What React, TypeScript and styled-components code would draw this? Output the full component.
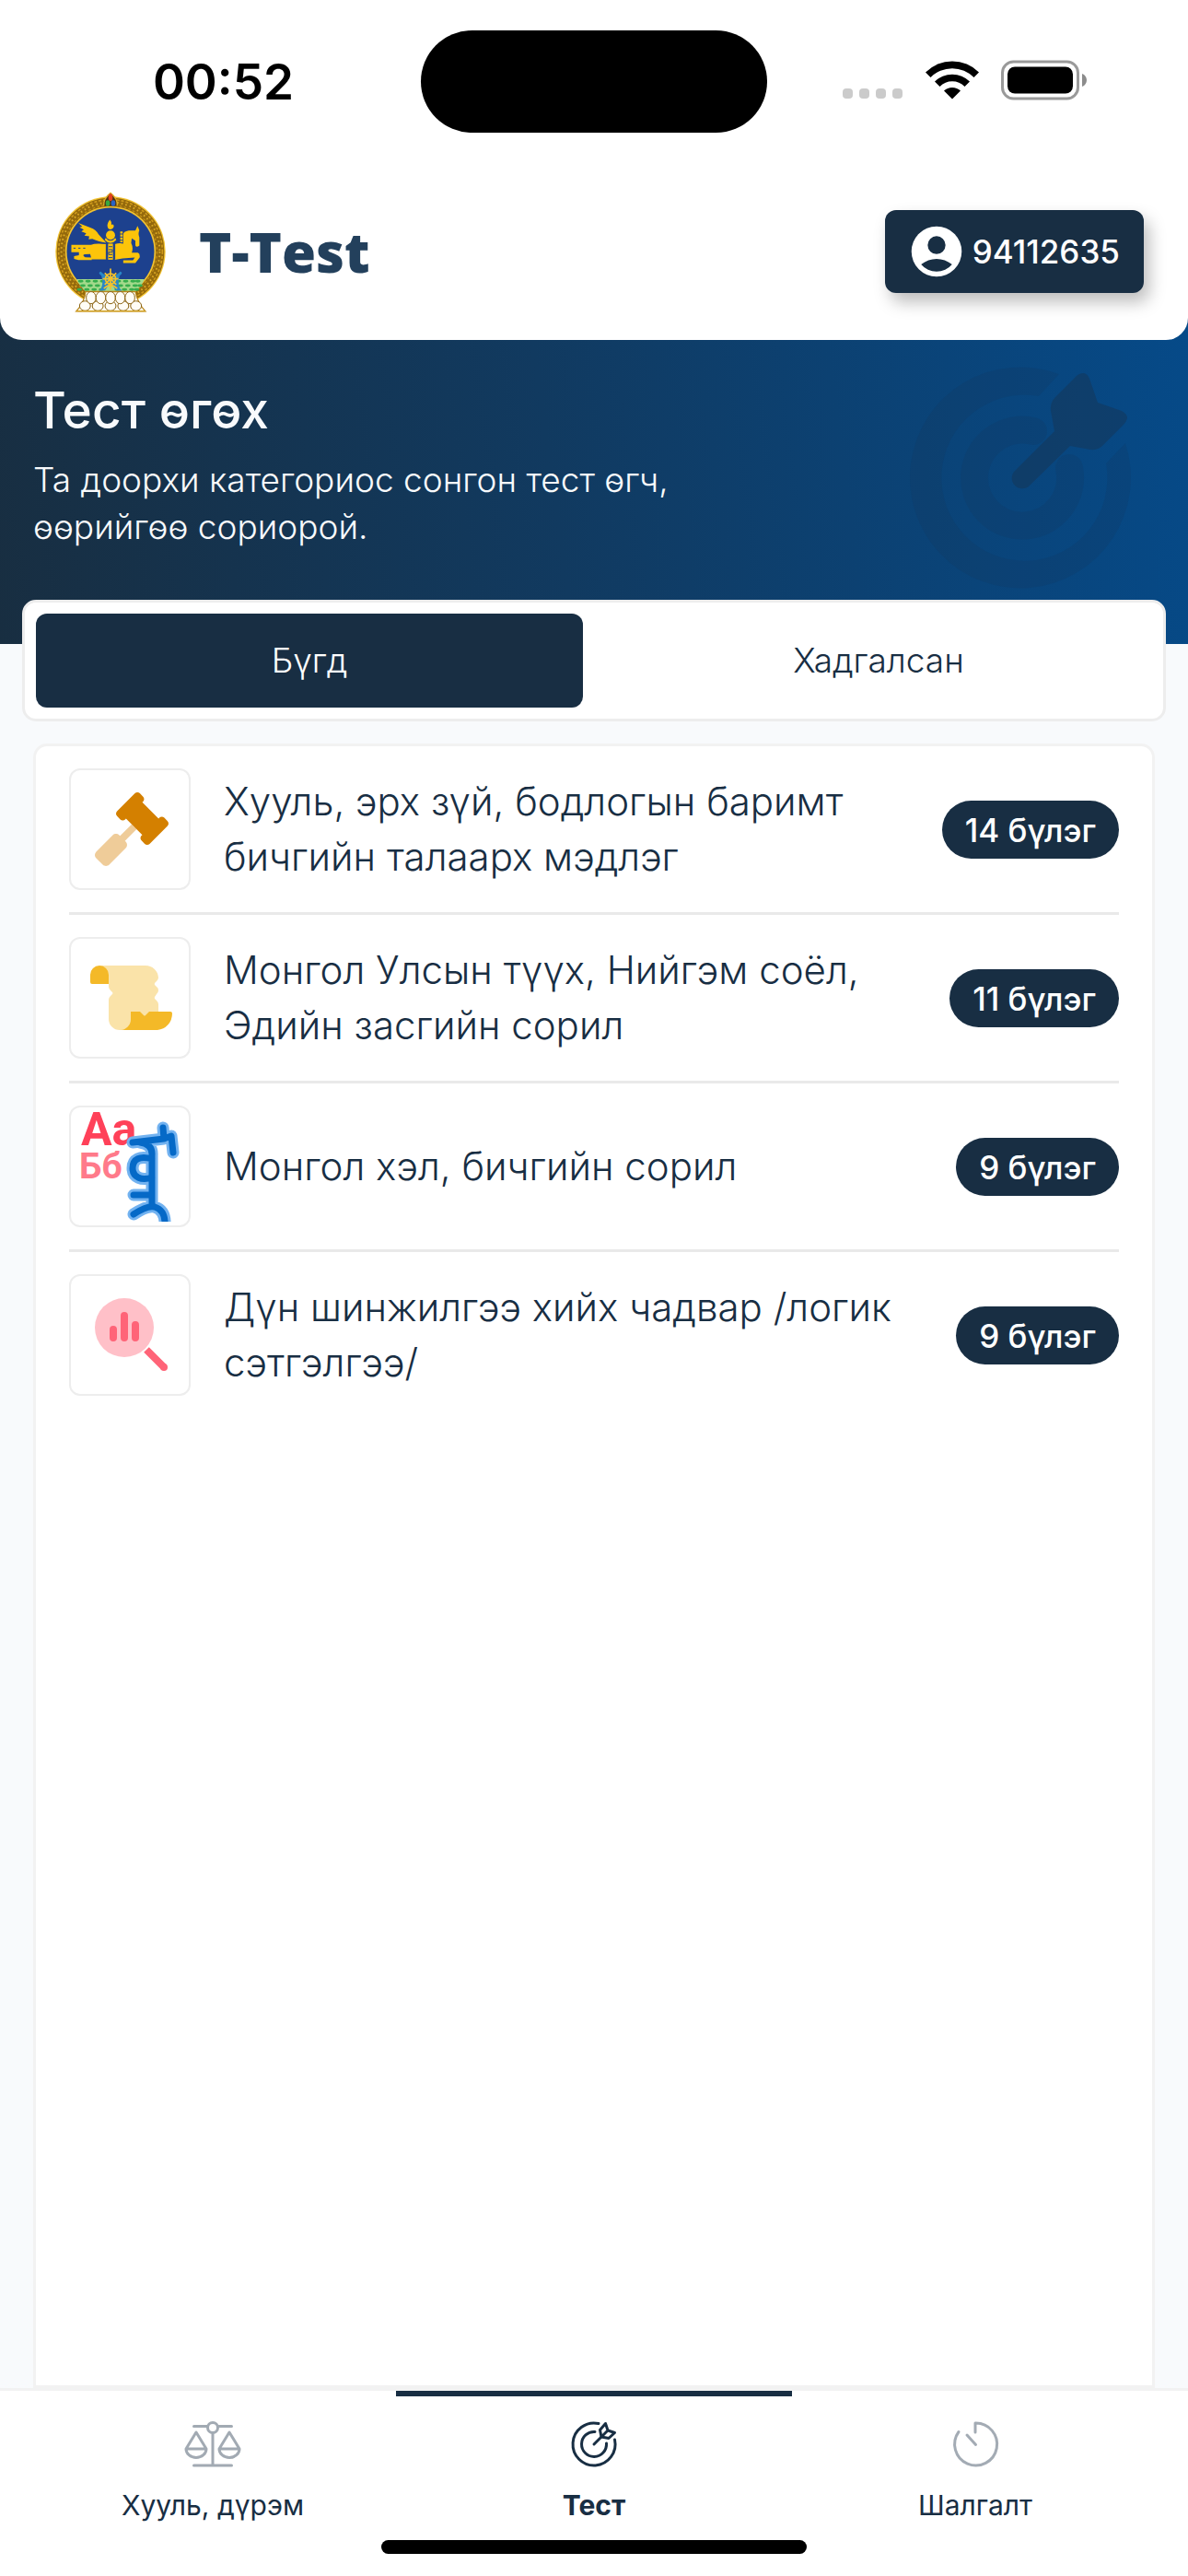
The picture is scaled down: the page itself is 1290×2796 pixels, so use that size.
import React, { useState } from "react";
import styled, { createGlobalStyle } from "styled-components";

const navy = "#182e43";

const GlobalStyle = createGlobalStyle`
  * { box-sizing: border-box; }
  html, body { margin: 0; padding: 0; }
  body { background: #f8fafc; font-family: Inter, "Noto Sans", sans-serif; color: ${navy}; }
  button { font: inherit; border: 0; margin: 0; cursor: pointer; }
  a { color: inherit; text-decoration: none; }
  h1, h2, p, ul { margin: 0; padding: 0; }
  svg { display: block; flex: none; overflow: visible; }
`;

const Screen = styled.div`
  display: flex;
  flex-direction: column;
  min-height: 100vh;
  background: #f8fafc;
`;

const Masthead = styled.div`
  background: linear-gradient(82deg, #182e41 0%, #113a60 45%, #054b8b 100%);
`;

const TopPanel = styled.div`
  background: #fff;
  border-radius: 0 0 24px 24px;
`;

const StatusBar = styled.div`
  display: grid;
  grid-template-columns: 1fr 376px 1fr;
  align-items: center;
  padding-top: 33px;
`;

const Clock = styled.time`
  justify-self: center;
  margin-left: 28px;
  font-size: 53px;
  line-height: 64px;
  font-weight: 600;
  color: #000;
`;

const Island = styled.div`
  height: 111px;
  border-radius: 56px;
  background: #000;
`;

const StatusIcons = styled.div`
  display: flex;
  align-items: center;
  gap: 24px;
  justify-self: center;
  margin-right: 28px;
  padding-bottom: 3px;
`;

const Header = styled.header`
  display: flex;
  align-items: center;
  justify-content: space-between;
  height: 225px;
  padding: 33px 48px 0 60px;
`;

const Brand = styled.div`
  display: flex;
  align-items: center;
  gap: 36px;
`;

const BrandName = styled.h1`
  font-family: "Open Sans", sans-serif;
  font-weight: 800;
  font-size: 60px;
  line-height: 72px;
  color: #23405c;
`;

const AccountButton = styled.button`
  display: flex;
  align-items: center;
  gap: 9px;
  height: 90px;
  padding: 0 26px;
  border-radius: 12px;
  background: ${navy};
  color: #fff;
  font-size: 35px;
  line-height: 48px;
  font-weight: 500;
  box-shadow: 6px 10px 18px rgba(0, 0, 0, 0.26);
`;

const Hero = styled.section`
  display: flex;
  justify-content: space-between;
  align-items: flex-start;
  height: 330px;
  padding: 30px 60px 0 36px;
`;

const HeroText = styled.div`
  display: flex;
  flex-direction: column;
  gap: 14px;
  padding-top: 10px;
  color: #f8fafc;
`;

const HeroTitle = styled.h2`
  font-size: 55px;
  line-height: 72px;
  font-weight: 500;
`;

const HeroNote = styled.p`
  max-width: 740px;
  font-size: 37px;
  line-height: 51px;
  font-weight: 300;
`;

const Tabs = styled.div`
  display: grid;
  grid-template-columns: 1fr 1fr;
  gap: 24px;
  margin: -48px 24px 24px;
  padding: 12px;
  border: 3px solid #ededed;
  border-radius: 15px;
  background: #fff;
`;

const Tab = styled.button<{ $active: boolean }>`
  height: 102px;
  border-radius: 12px;
  background: ${(p) => (p.$active ? navy : "transparent")};
  color: ${(p) => (p.$active ? "#fff" : navy)};
  font-size: 37px;
  line-height: 48px;
  font-weight: 300;
`;

const Card = styled.ul`
  flex: 1;
  margin: 0 36px;
  padding: 0 36px;
  border: 3px solid #f2f2f2;
  border-radius: 15px 15px 0 0;
  background: #fff;
  list-style: none;
`;

const Row = styled.li`
  & + & { border-top: 3px solid #e9e9e9; }
`;

const RowLink = styled.a`
  display: flex;
  align-items: center;
  gap: 36px;
  padding: 24px 0;
`;

const IconTile = styled.span`
  display: flex;
  align-items: center;
  justify-content: center;
  flex: none;
  width: 132px;
  height: 132px;
  padding-left: 3px;
  border: 2px solid #ededed;
  border-radius: 12px;
`;

const RowTitle = styled.span`
  flex: 1;
  font-size: 42px;
  line-height: 60px;
  font-weight: 300;
`;

const Badge = styled.span`
  flex: none;
  padding: 2px 25px 0;
  border-radius: 32px;
  background: ${navy};
  color: #fff;
  font-size: 35px;
  line-height: 61px;
  font-weight: 500;
`;

const BottomBar = styled.footer`
  border-top: 3px solid #f2f2f2;
  background: #fff;
  padding-bottom: 24px;
`;

const Nav = styled.nav`
  position: relative;
  display: grid;
  grid-template-columns: repeat(3, 1fr);
  padding: 30px 24px 0;
`;

const NavMarker = styled.span`
  position: absolute;
  top: 0;
  left: calc(100% / 3);
  width: calc(100% / 3);
  height: 6px;
  background: ${navy};
`;

const NavLink = styled.a<{ $active?: boolean }>`
  display: flex;
  flex-direction: column;
  align-items: center;
  gap: 20px;
  height: 132px;
  padding-top: 3px;
  font-size: 30px;
  line-height: 42px;
  font-weight: ${(p) => (p.$active ? 700 : 400)};
  svg { opacity: ${(p) => (p.$active ? 1 : 0.4)}; }
`;

const HomeIndicator = styled.div`
  width: 462px;
  height: 15px;
  margin: 0 auto;
  border-radius: 8px;
  background: #000;
`;

const Signal = () => (
  <svg width="66" height="44" viewBox="0 0 66 44" fill="#cbcbcb">
    {[0, 18, 36, 54].map((x) => (
      <rect key={x} x={x} y="31" width="11" height="11" rx="4" />
    ))}
  </svg>
);

const Wifi = () => (
  <svg width="58" height="44" viewBox="0 0 58 44">
    <path d="M0 13.500A41 41 0 0 1 58 13.500L52.500 19A33 33 0 0 0 5.500 19Z" />
    <path d="M10 23.500A27 27 0 0 1 48 23.500L42.500 29A19 19 0 0 0 15.500 29Z" />
    <path d="M20 33.500A13 13 0 0 1 38 33.500L29 42.500Z" />
  </svg>
);

const Battery = () => (
  <svg width="94" height="44" viewBox="0 0 94 44">
    <rect x="1.500" y="2" width="82" height="40" rx="12" fill="none" stroke="#9a9a9a" strokeWidth="3" />
    <rect x="7" y="7.500" width="71" height="29" rx="8" />
    <path d="M88 15c3 1 5 4 5 7s-2 6-5 7z" fill="#8c8c8c" />
  </svg>
);

const Emblem = () => {
  const petals = [0, 1, 2, 3, 4];
  return (
    <svg width="120" height="132" viewBox="28 52 364 396" role="img" aria-label="Төрийн сүлд">
      <circle cx="210" cy="250" r="181" fill="#f2c230" />
      <circle cx="210" cy="250" r="163" fill="none" stroke="#94690c" strokeWidth="28" />
      <circle cx="210" cy="250" r="171" fill="none" stroke="#cf9a1c" strokeWidth="5" strokeDasharray="9 6" />
      <circle cx="210" cy="250" r="162" fill="none" stroke="#dba925" strokeWidth="6" strokeDasharray="5 9" />
      <circle cx="210" cy="250" r="153" fill="none" stroke="#c08f18" strokeWidth="4" strokeDasharray="8 7" />
      <circle cx="210" cy="250" r="144" fill="#1d418e" />
      <path d="M98 341H322Q312 363 292 382H128Q108 363 98 341Z" fill="#a3d98b" />
      {[348, 362, 375].map((y, r) => (
        <g key={y} fill="#36ad4c">
          {[112, 136, 160, 184, 236, 260, 284, 300].map((x) => (
            <ellipse key={x} cx={x + (r % 2 ? 9 : 0) - r * 2} cy={y} rx="9" ry="4.500" />
          ))}
        </g>
      ))}
      <path d="M172 380Q190 365 180 330Q166 320 178 316Q210 350 242 316Q254 320 240 330Q230 365 248 380L228 378L210 350L192 378Z" fill="#2887c8" />
      <g stroke="#f5c22b" strokeWidth="5" fill="none">
        <circle cx="210" cy="340" r="17" />
        <path d="M210 306V376M184 340H236M191 321L229 359M229 321L191 359M188 372Q210 350 232 372" />
      </g>
      <g fill="#fcc40a">
        <path d="M208 145Q198 158 200 167Q202 177 210 177Q220 176 221 166Q220 158 213 162Q215 152 208 145Z" />
        <circle cx="210" cy="196" r="15" />
        <path d="M194 205Q210 224 226 205L229 212Q210 232 191 212Z" />
        <path d="M104 156L143 171Q163 178 171 194L196 221Q168 216 150 208L138 210L140 200L124 198L130 190L114 184L122 178L108 170L117 168Z" />
        <path d="M81 228H146Q160 222 196 226V276H148L143 258L125 259Q115 262 127 269L148 270V278H104L90 274V265L106 262V252H81Z" />
        <path d="M224 226Q240 220 252 224V194Q252 184 270 181H292L299 166L305 180Q300 190 305 204V230Q296 238 292 230V214L280 207L278 222Q286 238 280 254H300Q308 257 306 270L292 288H252V279H284L290 270L250 273L224 277Z" />
        <path d="M202 224h16v53h-16z" />
      </g>
      <path d="M204 234h12M204 244h12v8h-12v8h12M204 270h12M88 239h7M104 239h7M120 239h7M196 226v50M224 226v50" stroke="#1d418e" strokeWidth="3" fill="none" />
      <path d="M246 184v36" stroke="#fcc40a" strokeWidth="8" strokeDasharray="7 3" />
      <path d="M128 382Q124 418 97 447H325Q298 418 292 382Z" fill="#fffdf5" stroke="#b98719" strokeWidth="4" />
      <g fill="#fffdf6" stroke="#8a6212" strokeWidth="3">
        {petals.map((i) => (
          <ellipse key={i} cx={126 + i * 42} cy="429" rx="18" ry="16" />
        ))}
        {petals.map((i) => (
          <ellipse key={i} cx={146 + i * 32} cy="402" rx="16" ry="20" />
        ))}
      </g>
      <path d="M97 446H325" stroke="#d6a524" strokeWidth="4" />
      <path d="M186 98Q184 74 210 54Q236 74 234 98Z" fill="#e0b02a" />
      <path d="M190 100Q188 78 210 60Q232 78 230 100Z" fill="#4a3212" />
      <ellipse cx="210" cy="72" rx="7" ry="12" fill="#e2401f" />
      <ellipse cx="201" cy="91" rx="7" ry="10" fill="#37a83f" />
      <ellipse cx="219" cy="91" rx="7" ry="10" fill="#2a62c4" />
    </svg>
  );
};

const AccountIcon = () => (
  <svg width="60" height="60" viewBox="1 1 22 22">
    <path
      fill="#fff"
      fillRule="evenodd"
      d="M12 2a10 10 0 1 0 0 20a10 10 0 0 0 0-20zM12 5.900a3.550 3.550 0 1 1 0 7.100a3.550 3.550 0 0 1 0-7.100zM5.850 17.100Q8.600 14.900 12 14.900T18.150 17.100A8 8 0 0 1 5.850 17.100z"
    />
  </svg>
);

const HeroTarget = () => (
  <svg width="240" height="240" viewBox="0 0 240 240">
    <path d="M160 7A120 120 0 1 0 232 82L211 104A90 90 0 1 1 138 31Z" fill="#183450" fillOpacity="0.160" />
    <path d="M132 69A52 52 0 1 0 171 109" fill="none" stroke="#183450" strokeOpacity="0.160" strokeWidth="30" strokeLinecap="round" />
    <path
      fill="#183450"
      fillOpacity="0.450"
      d="M155 69L151 47Q150 38 156 32L177 11Q181 6 187 6Q191 7 193 12L202 38L228 47Q234 50 234 55Q233 59 230 62L208 84Q203 90 194 89L172 85L128 128A11 11 0 0 1 112 112Z"
    />
  </svg>
);

const GavelIcon = () => (
  <svg width="80" height="80" viewBox="0 0 512 512">
    <path fill="#efcc99" d="M256.070 221.990l-81.040 81.040-5.657-5.657c-12.497-12.497-32.758-12.497-45.255 0L9.373 412.118c-12.497 12.497-12.497 32.758 0 45.255l45.255 45.255c12.497 12.497 32.758 12.497 45.255 0l114.745-114.745c12.497-12.497 12.497-32.758 0-45.255l-5.657-5.657 81.040-81.040z" />
    <path fill="#d48000" d="M504.971 199.362l-22.627-22.627c-9.373-9.373-24.569-9.373-33.941 0l-5.657 5.657L329.608 69.255l5.657-5.657c9.373-9.373 9.373-24.569 0-33.941L312.638 7.029c-9.373-9.373-24.569-9.373-33.941 0L154.246 131.480c-9.373 9.373-9.373 24.569 0 33.941l22.627 22.627c9.373 9.373 24.569 9.373 33.941 0l5.657-5.657 113.137 113.137-5.657 5.657c-9.373 9.373-9.373 24.569 0 33.941l22.627 22.627c9.373 9.373 24.569 9.373 33.941 0l124.451-124.451c9.372-9.372 9.372-24.568 0-33.941z" />
  </svg>
);

const ScrollIcon = () => (
  <svg width="90" height="70" viewBox="0 0 90 70">
    <path fill="#fae3a9" d="M10 0H60A14 14 0 0 1 74 13Q74 15 72 17L70 19Q69.500 20 70 21L72 23Q74 24 74 27Q74 29 72 31L70 34Q69.500 35 70 36L72 38Q74 40 74 42V56H44V58A12 12 0 0 1 32 70A12 12 0 0 1 20 58V37Q20 35 22 33L24 31Q25 30 24 29L22 27Q20 25 20 23V10Z" />
    <path fill="#f4b928" d="M0 10A10 10 0 0 1 20 10V20H2Q0 20 0 18ZM44 50H54L58 54Q59 55 60 54L64 50H87Q89 50 89 52A17 18 0 0 1 73 70H32A12 12 0 0 0 44 58Z" />
  </svg>
);

const scriptLayers = [
  { color: "#72b2f0", width: 13 },
  { color: "#0569c7", width: 7 },
];

const LettersIcon = () => (
  <svg width="114" height="120" viewBox="0 0 114 120">
    <clipPath id="script-edge">
      <path d="M0 0H114V120H0Z" />
    </clipPath>
    <text fontFamily="Roboto, sans-serif" fontWeight="700">
      <tspan x="2" y="37" fontSize="50" fill="#ff4159">Аа</tspan>
      <tspan x="0" y="73" fontSize="39" fill="#ff7a8a">Бб</tspan>
    </text>
    <g fill="none" strokeLinecap="round" strokeLinejoin="round" clipPath="url(#script-edge)">
      {scriptLayers.map((s) => (
        <path
          key={s.color}
          stroke={s.color}
          strokeWidth={s.width}
          d="M58 34L92 30L91 18M92 30L100 27L102 45M66 34Q80 36 79 48V103M79 52C66 48 58 52 58 62S68 76 79 72M59 91H78M59 112Q74 102 82 104Q94 108 93 124"
        />
      ))}
    </g>
  </svg>
);

const AnalysisIcon = () => (
  <svg width="80" height="80" viewBox="0 0 80 80">
    <circle cx="32" cy="32" r="32" fill="#ffc0c8" />
    <path d="M56 56L75 75" stroke="#ff6478" strokeWidth="8" />
    <circle cx="75" cy="75" r="4" fill="#ff6478" />
    <path d="M20 34V43M32 19V43M44 29V43" stroke="#ff6478" strokeWidth="8" strokeLinecap="round" />
  </svg>
);

const line = { fill: "none", stroke: navy, strokeWidth: 3, strokeLinecap: "round", strokeLinejoin: "round" } as const;

const ScalesIcon = () => (
  <svg width="62" height="50" viewBox="0 0 62 50" {...line}>
    <path d="M10.500 5.500H25.500M36.500 5.500H51.500M31 13V48M10.500 48H51.500" />
    <circle cx="31" cy="7" r="5.500" />
    <path d="M13 12L2 30A11 9.500 0 0 0 24 30ZM2 30H24M49 12L38 30A11 9.500 0 0 0 60 30ZM38 30H60" />
  </svg>
);

const TargetIcon = () => (
  <svg width="50" height="50" viewBox="0 0 50 50" {...line}>
    <path d="M30 2.500A23 23 0 1 0 47.500 20M26 11.500A13.500 13.500 0 1 0 38.500 24M25 25L39 11" />
    <path d="M33 17L31.500 9.500L37.500 2.500L40 10L47.500 12.500L41 18.500Z" />
  </svg>
);

const TimerIcon = () => (
  <svg width="50" height="50" viewBox="0 0 50 50" {...line}>
    <path d="M25 12V2A23 23 0 1 1 7 11.500M16 15L25.500 25.500" />
  </svg>
);

const categories = [
  { title: "Хууль, эрх зүй, бодлогын баримт бичгийн талаарх мэдлэг", count: 14, Icon: GavelIcon },
  { title: "Монгол Улсын түүх, Нийгэм соёл, Эдийн засгийн сорил", count: 11, Icon: ScrollIcon },
  { title: "Монгол хэл, бичгийн сорил", count: 9, Icon: LettersIcon },
  { title: "Дүн шинжилгээ хийх чадвар /логик сэтгэлгээ/", count: 9, Icon: AnalysisIcon },
];

const tabNames = ["Бүгд", "Хадгалсан"];

export default function App() {
  const [tab, setTab] = useState(0);
  return (
    <>
      <GlobalStyle />
      <Screen>
        <Masthead>
          <TopPanel>
            <StatusBar>
              <Clock>00:52</Clock>
              <Island />
              <StatusIcons>
                <Signal />
                <Wifi />
                <Battery />
              </StatusIcons>
            </StatusBar>
            <Header>
              <Brand>
                <Emblem />
                <BrandName>T-Test</BrandName>
              </Brand>
              <AccountButton type="button">
                <AccountIcon />
                94112635
              </AccountButton>
            </Header>
          </TopPanel>
          <Hero>
            <HeroText>
              <HeroTitle>Тест өгөх</HeroTitle>
              <HeroNote>Та доорхи категориос сонгон тест өгч, өөрийгөө сориорой.</HeroNote>
            </HeroText>
            <HeroTarget />
          </Hero>
        </Masthead>
        <Tabs role="tablist">
          {tabNames.map((name, i) => (
            <Tab key={name} type="button" role="tab" aria-selected={tab === i} $active={tab === i} onClick={() => setTab(i)}>
              {name}
            </Tab>
          ))}
        </Tabs>
        <Card>
          {categories.map(({ title, count, Icon }) => (
            <Row key={title}>
              <RowLink href="#">
                <IconTile>
                  <Icon />
                </IconTile>
                <RowTitle>{title}</RowTitle>
                <Badge>{count} бүлэг</Badge>
              </RowLink>
            </Row>
          ))}
        </Card>
        <BottomBar>
          <Nav>
            <NavMarker />
            <NavLink href="#">
              <ScalesIcon />
              Хууль, дүрэм
            </NavLink>
            <NavLink href="#" $active>
              <TargetIcon />
              Тест
            </NavLink>
            <NavLink href="#">
              <TimerIcon />
              Шалгалт
            </NavLink>
          </Nav>
          <HomeIndicator />
        </BottomBar>
      </Screen>
    </>
  );
}
